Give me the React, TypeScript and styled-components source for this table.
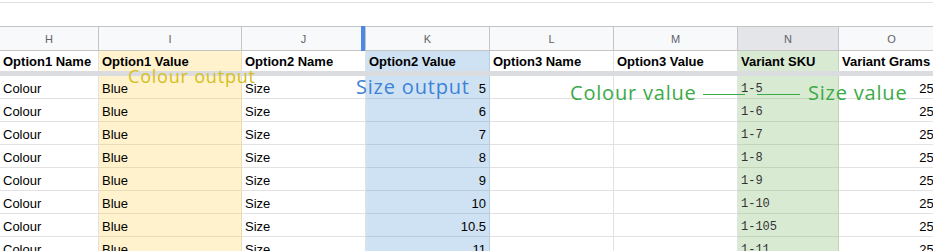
import React from 'react';
import styled, { createGlobalStyle } from 'styled-components';

type Fill = 'none' | 'yellow' | 'blue' | 'green';

interface Column {
  letter: string;
  width: number;
  title: string;
  fill: Fill;
  align: 'left' | 'right';
  mono?: boolean;
  marker?: boolean;
  selected?: boolean;
}

const columns: Column[] = [
  { letter: 'H', width: 99, title: 'Option1 Name', fill: 'none', align: 'left' },
  { letter: 'I', width: 143, title: 'Option1 Value', fill: 'yellow', align: 'left' },
  { letter: 'J', width: 124, title: 'Option2 Name', fill: 'none', align: 'left', marker: true },
  { letter: 'K', width: 124, title: 'Option2 Value', fill: 'blue', align: 'right' },
  { letter: 'L', width: 124, title: 'Option3 Name', fill: 'none', align: 'left' },
  { letter: 'M', width: 124, title: 'Option3 Value', fill: 'none', align: 'left' },
  { letter: 'N', width: 101, title: 'Variant SKU', fill: 'green', align: 'left', mono: true, selected: true },
  { letter: 'O', width: 106, title: 'Variant Grams', fill: 'none', align: 'right' },
];

const sizes = ['5', '6', '7', '8', '9', '10', '10.5', '11'];
const skus = ['1-5', '1-6', '1-7', '1-8', '1-9', '1-10', '1-105', '1-11'];

const rows = sizes.map((size, i) => ['Colour', 'Blue', 'Size', size, '', '', skus[i], '250']);

const fills: Record<Fill, { bg: string; line: string }> = {
  none: { bg: '#ffffff', line: '#e2e2e2' },
  yellow: { bg: '#fff2cc', line: '#e9dcb6' },
  blue: { bg: '#cfe2f3', line: '#b8cde0' },
  green: { bg: '#d9ead3', line: '#c3d6bc' },
};

const GlobalStyle = createGlobalStyle`
  html, body {
    margin: 0;
    padding: 0;
    background: #fff;
  }
  body {
    width: 933px;
    height: 251px;
    overflow: hidden;
    font-family: "Liberation Sans", Arial, sans-serif;
  }
`;

export default function App() {
  return (
    <>
      <GlobalStyle />
      <Page>
        <TopBar>
          <Rule />
        </TopBar>
        <Sheet>
          <LetterRow>
            {columns.map(c => (
              <LetterCell key={c.letter} $width={c.width} $selected={c.selected}>
                {c.letter}
                {c.marker && <ResizeMarker />}
              </LetterCell>
            ))}
          </LetterRow>
          <TitleRow>
            {columns.map(c => (
              <TitleCell key={c.letter} $width={c.width} $fill={c.fill}>
                {c.title}
              </TitleCell>
            ))}
          </TitleRow>
          <FreezeBar />
          {rows.map((row, r) => (
            <Row key={r}>
              {columns.map((c, i) => (
                <Cell key={c.letter} $width={c.width} $fill={c.fill} $align={c.align} $mono={c.mono}>
                  {row[i]}
                </Cell>
              ))}
            </Row>
          ))}
        </Sheet>

        {/* annotations drawn over the sheet */}
        <Note $color="#d5bf1f" $size={18} style={{ left: 128, top: 67 }}>Colour output</Note>
        <Note $color="#3d82d6" $size={20} style={{ left: 356, top: 77 }}>Size output</Note>
        <Note $color="#3aab47" $size={20} style={{ left: 570, top: 83 }}>Colour value</Note>
        <Connector style={{ left: 703, width: 42 }} />
        <Connector style={{ left: 757, width: 43 }} />
        <Note $color="#3aab47" $size={20} style={{ left: 808, top: 83 }}>Size value</Note>
      </Page>
    </>
  );
}

const Page = styled.div`
  position: relative;
  width: 933px;
  height: 251px;
  overflow: hidden;
`;

const TopBar = styled.div`
  height: 26px;
  padding-top: 2px;
  box-sizing: border-box;
`;

const Rule = styled.div`
  height: 1px;
  background: #e0e0e0;
`;

const Sheet = styled.div`
  display: flex;
  flex-direction: column;
  width: 1100px;
`;

const LetterRow = styled.div`
  display: flex;
  height: 25px;
  box-sizing: border-box;
  border-top: 1px solid #c4c4c4;
  border-bottom: 1px solid #c4c4c4;
  background: #f8f9fa;
`;

const LetterCell = styled.div<{ $width: number; $selected?: boolean }>`
  position: relative;
  flex: 0 0 ${p => p.$width}px;
  box-sizing: border-box;
  border-right: 1px solid #c4c4c4;
  background: ${p => (p.$selected ? '#e3e5e8' : 'transparent')};
  display: flex;
  align-items: center;
  justify-content: center;
  font-size: 11px;
  color: #5f6368;
`;

const ResizeMarker = styled.div`
  position: absolute;
  top: -1px;
  bottom: -1px;
  right: 0;
  width: 4px;
  background: #4a89e8;
`;

const TitleRow = styled.div`
  display: flex;
  height: 20px;
`;

const TitleCell = styled.div<{ $width: number; $fill: Fill }>`
  flex: 0 0 ${p => p.$width}px;
  box-sizing: border-box;
  border-right: 1px solid ${p => fills[p.$fill].line};
  background: ${p => fills[p.$fill].bg};
  display: flex;
  align-items: flex-end;
  padding: 0 3px 2px 3px;
  font-size: 13px;
  font-weight: 700;
  color: #000;
  white-space: nowrap;
  overflow: hidden;
`;

const FreezeBar = styled.div`
  height: 5px;
  background: #dadce0;
`;

const Row = styled.div`
  display: flex;
  height: 23px;
`;

const Cell = styled.div<{ $width: number; $fill: Fill; $align: 'left' | 'right'; $mono?: boolean }>`
  flex: 0 0 ${p => p.$width}px;
  box-sizing: border-box;
  border-right: 1px solid ${p => fills[p.$fill].line};
  border-bottom: 1px solid ${p => fills[p.$fill].line};
  background: ${p => fills[p.$fill].bg};
  display: flex;
  align-items: flex-end;
  justify-content: ${p => (p.$align === 'right' ? 'flex-end' : 'flex-start')};
  padding: 0 3px 2px 3px;
  font-family: ${p => (p.$mono ? '"Liberation Mono", "DejaVu Sans Mono", monospace' : '"Liberation Sans", Arial, sans-serif')};
  font-size: ${p => (p.$mono ? '12px' : '13px')};
  color: ${p => (p.$mono ? '#333333' : '#000')};
  white-space: nowrap;
`;

const Note = styled.div<{ $color: string; $size: number }>`
  position: absolute;
  font-family: "Open Sans", "Noto Sans", sans-serif;
  font-size: ${p => p.$size}px;
  font-weight: 500;
  letter-spacing: 0.8px;
  line-height: 1;
  color: ${p => p.$color};
  white-space: nowrap;
`;

const Connector = styled.div`
  position: absolute;
  top: 93.5px;
  height: 1.5px;
  background: #3aab47;
`;
